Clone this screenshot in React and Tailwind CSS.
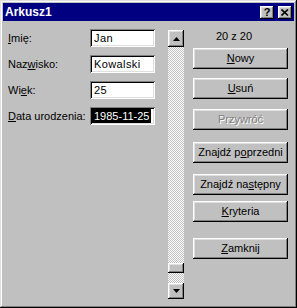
import React from 'react';

const raised =
  'shadow-[inset_-1px_-1px_#000,inset_1px_1px_#fff,inset_-2px_-2px_#808080,inset_2px_2px_#dfdfdf]';
const sunken =
  'shadow-[inset_1px_1px_#808080,inset_-1px_-1px_#fff,inset_2px_2px_#000,inset_-2px_-2px_#dfdfdf]';

function Field({ label, value, selected }) {
  return (
    <div className="flex items-center h-[18px] mb-[8px]">
      <div className="w-[82px] text-[11px] text-black">{label}</div>
      <div className={`w-[65px] h-[18px] bg-white flex items-center pl-[2px] ${sunken}`}>
        {selected ? (
          <span className="bg-black text-white text-[11px] leading-[14px] px-[2px]">
            {value}
          </span>
        ) : (
          <span className="text-black text-[11px] tracking-[0.4px] pl-[2px]">{value}</span>
        )}
      </div>
    </div>
  );
}

function Btn({ children, disabled, className = '' }) {
  return (
    <div
      className={`w-[95px] h-[21px] flex items-center justify-center text-[11px] ${raised} ${
        disabled ? 'text-[#808080] [text-shadow:1px_1px_0_#fff]' : 'text-black'
      } ${className}`}
    >
      {children}
    </div>
  );
}

function Arrow({ down }) {
  return (
    <svg width="7" height="4" viewBox="0 0 7 4">
      {down ? (
        <polygon points="0,0 7,0 3.5,4" fill="#000" />
      ) : (
        <polygon points="3.5,0 7,4 0,4" fill="#000" />
      )}
    </svg>
  );
}

export default function App() {
  return (
    <div
      className="w-[297px] h-[308px] bg-[#c0c0c0] p-[3px] flex flex-col select-none shadow-[inset_-1px_-1px_#000,inset_1px_1px_#dfdfdf,inset_-2px_-2px_#808080,inset_2px_2px_#fff]"
      style={{ fontFamily: '"Liberation Sans", Arial, sans-serif' }}
    >
      {/* Title bar */}
      <div className="h-[18px] bg-[#000080] flex items-center pl-[2px] pr-[2px]">
        <span className="text-white font-bold text-[12px] flex-1">Arkusz1</span>
        <div className={`w-[14px] h-[13px] bg-[#c0c0c0] flex items-center justify-center text-[11px] font-bold leading-none ${raised}`}>
          ?
        </div>
        <div className={`w-[14px] h-[13px] bg-[#c0c0c0] ml-[4px] flex items-center justify-center ${raised}`}>
          <svg width="8" height="7" viewBox="0 0 8 7">
            <path d="M0.5 0.5 L7 6.5 M7 0.5 L0.5 6.5" stroke="#000" strokeWidth="1.6" />
          </svg>
        </div>
      </div>

      <div className="flex flex-1">
        {/* Fields */}
        <div className="w-[165px] pl-[5px] pt-[8px]">
          <Field label={<><u>I</u>mię:</>} value="Jan" />
          <Field label={<>Naz<u>w</u>isko:</>} value="Kowalski" />
          <Field label={<>Wi<u>e</u>k:</>} value="25" />
          <Field label={<><u>D</u>ata urodzenia:</>} value="1985-11-25" selected />
        </div>

        {/* Scrollbar */}
        <div className="w-[16px] mt-[9px] h-[269px] flex flex-col">
          <div className={`h-[17px] bg-[#c0c0c0] flex items-center justify-center ${raised}`}>
            <Arrow />
          </div>
          <div className="flex-1 flex flex-col justify-end pb-[10px] bg-[repeating-conic-gradient(#c0c0c0_0_25%,#ffffff_0_50%)] bg-[length:2px_2px]">
            <div className={`h-[10px] bg-[#c0c0c0] ${raised}`} />
          </div>
          <div className={`h-[16px] bg-[#c0c0c0] flex items-center justify-center ${raised}`}>
            <Arrow down />
          </div>
        </div>

        {/* Buttons */}
        <div className="ml-[9px] w-[95px] pt-[9px] flex flex-col">
          <div className="h-[13px] pl-[23px] text-[11px] leading-[13px] text-black">20 z 20</div>
          <Btn className="mt-[5px]"><span><u>N</u>owy</span></Btn>
          <Btn className="mt-[9px]"><span><u>U</u>suń</span></Btn>
          <Btn className="mt-[10px]" disabled>Przywróć</Btn>
          <Btn className="mt-[12px]"><span>Znajdź p<u>o</u>przedni</span></Btn>
          <Btn className="mt-[11px]"><span>Znajdź na<u>s</u>tępny</span></Btn>
          <Btn className="mt-[6px]"><span><u>K</u>ryteria</span></Btn>
          <Btn className="mt-[16px]"><span><u>Z</u>amknij</span></Btn>
        </div>
      </div>
    </div>
  );
}
